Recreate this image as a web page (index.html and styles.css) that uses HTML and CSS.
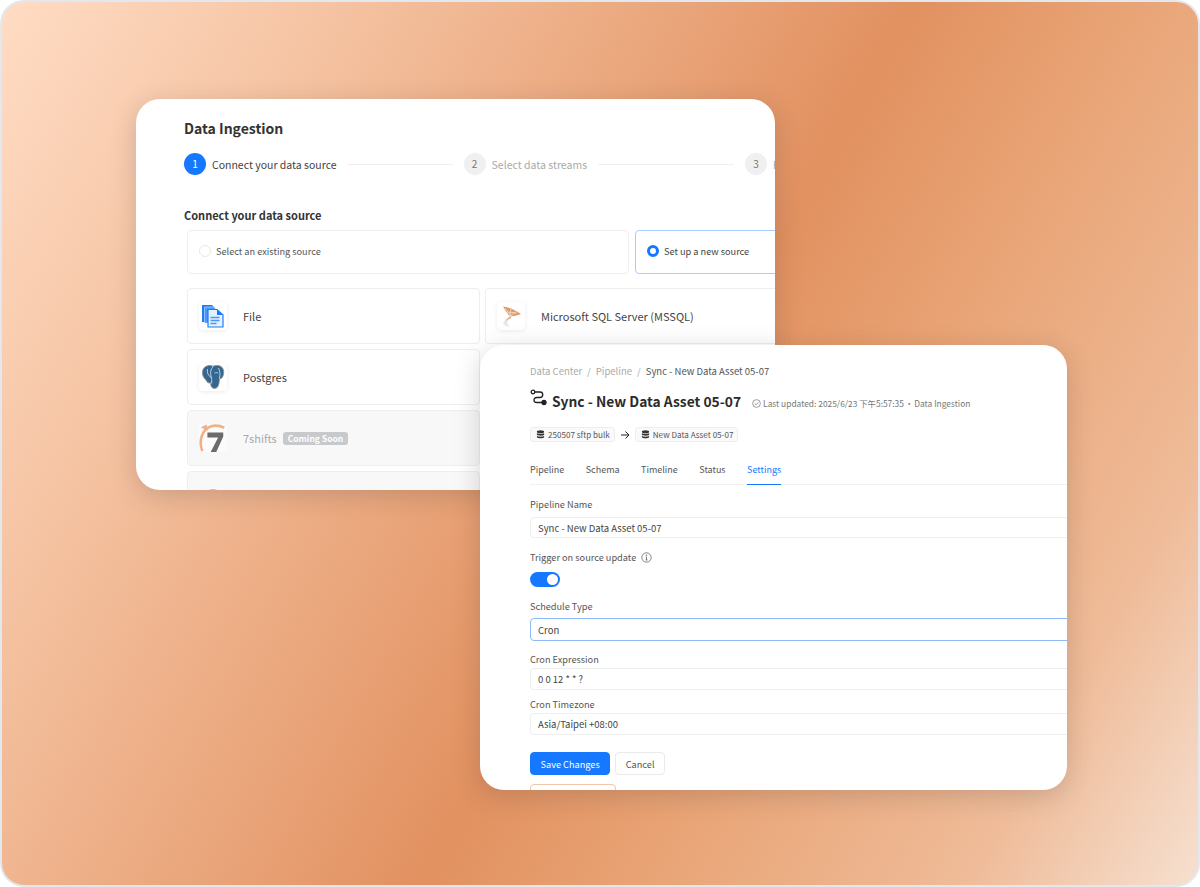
FILE: index.html
```html
<!DOCTYPE html>
<html lang="en">
<head>
  <meta charset="UTF-8" />
  <title>Data Ingestion</title>
  <link rel="stylesheet" href="styles.css">
</head>
<body>
  <div class="frame">

    <div class="window" id="ingestWindow">
      <h1 class="ingest-title">Data Ingestion</h1>

      <div class="stepper">
        <span class="step-num active">1</span>
        <span class="step-label active">Connect your data source</span>
        <span class="step-line first"></span>
        <span class="step-num">2</span>
        <span class="step-label">Select data streams</span>
        <span class="step-line second"></span>
        <span class="step-num">3</span>
        <span class="step-label">Review</span>
      </div>

      <h2 class="section-title">Connect your data source</h2>

      <div class="option-row">
        <div class="option wide"><span class="radio"></span>Select an existing source</div>
        <div class="option selected"><span class="radio on"></span>Set up a new source</div>
      </div>

      <div class="source-grid">
        <div class="source">
          <span class="source-icon">
            <svg width="24" height="24" viewBox="0 0 24 24">
              <path d="M1 1h10l2 2v15H1z" fill="#1c7cf5"/>
              <path d="M3.500 3h10l1 2v14h-11z" fill="#4a97fa" stroke="#cfe3ff" stroke-width=".6"/>
              <path d="M7 5.500h9l6 5.500v12H7z" fill="#e4efff" stroke="#1c7cf5" stroke-width="1.200"/>
              <path d="M16 5.500V11h6z" fill="#1c7cf5"/>
              <path d="M9.500 13.500h9M9.500 16.500h9M9.500 19.500h6" stroke="#4a97fa" stroke-width="1.300"/>
            </svg>
          </span>
          <span class="source-name">File</span>
        </div>
        <div class="source">
          <span class="source-icon">
            <svg width="26" height="26" viewBox="0 0 26 26">
              <path d="M7 2c2-.8 4-.6 6 .3 2-.9 4.500-1.100 7-.3 3.500 1.300 4.500 6 3 10-.8 2-2 3-3.500 2.500-.2 3-.5 6.500-2 8.500-1.500 1.800-4 1.800-5.500.5-1-1-1.300-3-1.300-5-1.300.8-2.700.5-3.700-.7C6 15.500 4.500 14.800 3.300 12.500 1.500 8.500 2.500 3.500 7 2z" fill="#336791" stroke="#8c8c8c" stroke-width=".9"/>
              <path d="M13 2.500c-2.500 3-3 6.500-1.800 10 .6 2 .7 4.500.5 7M18.500 4c1.500 3 2 7 .8 10.500M7.500 5c-.8 3 .5 6.500 3.500 8.500M14.500 9c1.500-.5 2.500-.5 3.500 0" fill="none" stroke="#dfe7ee" stroke-width=".8"/>
            </svg>
          </span>
          <span class="source-name">Postgres</span>
        </div>
        <div class="source disabled">
          <span class="source-icon faded">
            <svg width="30" height="32" viewBox="0 0 30 32">
              <path d="M3.500 30C-.5 19 3 7 13 3.500c4-1.200 9-1 14 1.500" fill="none" stroke="#eeb28b" stroke-width="2.800"/>
              <path d="M2 4.500l6.500-3 .5 7z" fill="#eeb28b"/>
              <path d="M9 10h17v4.500L18.500 31h-6l8-15.500H9z" fill="#6b6b6d"/>
            </svg>
          </span>
          <span class="source-name">7shifts</span>
          <span class="soon">Coming Soon</span>
        </div>
        <div class="source disabled">
          <span class="source-icon plain">
            <svg width="26" height="26" viewBox="0 0 26 26"><circle cx="13" cy="13" r="10" fill="#a9c9ec"/></svg>
          </span>
        </div>
      </div>

      <div class="source-grid side">
        <div class="source">
          <span class="source-icon">
            <svg width="24" height="24" viewBox="0 0 24 24">
              <path d="M10 13c-3 1.500-5.500 4-6 6.500 1 2 4 3.500 7 3-2.500-1.500-3-3.500-2-5.500 1-1.500 2.500-2.800 4-3.500z" fill="#e9e9e9"/>
              <path d="M4 2.500c5 .5 11 3 18 7.500-4 1.500-7.500 2-11 2.500C8 9 6 6 4 2.500z" fill="#dc9a68"/>
              <path d="M6 4l6 8M12 5l-1 7M17 7.500l-6 4.500M8 8l10 1" stroke="#f8e4d4" stroke-width=".7"/>
              <path d="M11 12.500c-2 1.500-3.500 2.500-4.500 4.500 2-1 4-2 6-3.500z" fill="#e8b088"/>
            </svg>
          </span>
          <span class="source-name">Microsoft SQL Server (MSSQL)</span>
        </div>
      </div>
    </div>

    <div class="window" id="pipelineWindow">
      <div class="crumbs">
        <span class="crumb">Data Center</span><span class="crumb-sep">/</span><span class="crumb">Pipeline</span><span class="crumb-sep">/</span><span class="crumb current">Sync - New Data Asset 05-07</span>
      </div>

      <div class="heading">
        <svg class="heading-icon" width="18" height="18" viewBox="0 0 18 18" fill="none" stroke="#222" stroke-width="1.300">
          <circle cx="3" cy="3" r="1.800"/>
          <path d="M5 3h5a2.500 2.500 0 0 1 0 5.500H6.500a2.500 2.500 0 0 0 0 5h6"/>
          <circle cx="14" cy="13.500" r="2" fill="#222"/>
        </svg>
        <h1 class="pipeline-title">Sync - New Data Asset 05-07</h1>
        <span class="meta">
          <svg width="9" height="9" viewBox="0 0 10 10" fill="none" stroke="#777" stroke-width=".8"><circle cx="5" cy="5" r="4.300"/><path d="M3 5l1.500 1.500L7 3.800"/></svg>
          Last updated: 2025/6/23 下午5:57:35<span class="dot">·</span>Data Ingestion
        </span>
      </div>

      <div class="flow">
        <span class="chip">
          <svg width="9" height="9" viewBox="0 0 10 10" fill="#333"><ellipse cx="5" cy="2" rx="4" ry="1.700"/><path d="M1 3.400c1 1.300 7 1.300 8 0v1.900c-1 1.300-7 1.300-8 0zM1 6.500c1 1.300 7 1.300 8 0v1.600c-1 1.600-7 1.600-8 0z"/></svg>
          250507 sftp bulk
        </span>
        <svg width="10" height="10" viewBox="0 0 10 10" fill="none" stroke="#222" stroke-width="1"><path d="M1 5h8M5.500 1.500L9 5 5.500 8.500"/></svg>
        <span class="chip">
          <svg width="9" height="9" viewBox="0 0 10 10" fill="#333"><ellipse cx="5" cy="2" rx="4" ry="1.700"/><path d="M1 3.400c1 1.300 7 1.300 8 0v1.900c-1 1.300-7 1.300-8 0zM1 6.500c1 1.300 7 1.300 8 0v1.600c-1 1.600-7 1.600-8 0z"/></svg>
          New Data Asset 05-07
        </span>
      </div>

      <div class="tabs">
        <span class="tab">Pipeline</span>
        <span class="tab">Schema</span>
        <span class="tab">Timeline</span>
        <span class="tab">Status</span>
        <span class="tab active">Settings</span>
      </div>

      <div class="field name-field">
        <label>Pipeline Name</label>
        <div class="input">Sync - New Data Asset 05-07</div>
      </div>

      <div class="trigger">
        <label>Trigger on source update
          <svg width="11" height="11" viewBox="0 0 11 11" fill="none" stroke="#666" stroke-width=".8"><circle cx="5.500" cy="5.500" r="4.700"/><path d="M5.500 5v3M4.500 8h2M4.800 4.800h.7"/><circle cx="5.500" cy="3.200" r=".4"/></svg>
        </label>
        <span class="toggle"><span class="knob"></span></span>
      </div>

      <div class="field type-field">
        <label>Schedule Type</label>
        <div class="input focus">Cron</div>
      </div>

      <div class="field expr-field">
        <label>Cron Expression</label>
        <div class="input">0 0 12 * * ?</div>
      </div>

      <div class="field zone-field">
        <label>Cron Timezone</label>
        <div class="input">Asia/Taipei +08:00</div>
      </div>

      <div class="actions">
        <button class="btn primary">Save Changes</button>
        <button class="btn">Cancel</button>
      </div>
      <div class="danger"></div>
    </div>

  </div>
</body>
</html>
```

FILE: styles.css
```css
html, body {
  margin: 0;
  background: #ffffff;
}
body {
  width: 1200px;
  height: 887px;
  overflow: hidden;
  font-family: "Noto Sans CJK TC", "Noto Sans", sans-serif;
  color: #333;
}
.frame {
  position: relative;
  box-sizing: border-box;
  width: 1200px;
  height: 887px;
  overflow: hidden;
  border: 2px solid #e3e8ee;
  border-radius: 24px;
  background: linear-gradient(119deg, #ffdcc4 0%, #f5c3a2 20%, #e29160 54%, #e9a577 68%, #efbb98 86%, #f6e0d0 100%);
}

.window {
  position: absolute;
  overflow: hidden;
  box-sizing: border-box;
  background: #fff;
  border-radius: 24px;
  box-shadow: 0 6px 26px rgba(70, 60, 60, 0.22);
}
#ingestWindow {
  left: 134px;
  top: 97px;
  width: 639px;
  height: 391px;
  padding: 19px 0 0 48px;
}
#pipelineWindow {
  left: 478px;
  top: 343px;
  width: 587px;
  height: 445px;
  padding: 19px 0 0 50px;
}

/* data ingestion window */
.ingest-title {
  margin: 0;
  font-size: 14px;
  line-height: 20px;
  font-weight: 700;
  color: #333;
}
.stepper {
  display: flex;
  align-items: center;
  margin-top: 15px;
  width: 640px;
  font-size: 10.500px;
}
.step-num {
  flex: none;
  width: 22px;
  height: 22px;
  line-height: 22px;
  border-radius: 50%;
  background: #f0f0f0;
  color: #777;
  text-align: center;
  font-size: 10px;
}
.step-num.active {
  background: #1677ff;
  color: #fff;
}
.step-label {
  flex: none;
  margin-left: 6px;
  color: #aaa;
}
.step-label.active {
  color: #444;
}
.step-line {
  flex: none;
  height: 1px;
  margin: 0 11px 0 11px;
  background: #efefef;
}
.step-line.first { width: 105px; }
.step-line.second { width: 136px; }

.section-title {
  margin: 31px 0 0;
  font-size: 11px;
  line-height: 18px;
  font-weight: 700;
  color: #333;
}
.option-row {
  display: flex;
  gap: 6px;
  width: 700px;
  margin: 6px 0 0 3px;
}
.option {
  box-sizing: border-box;
  flex: none;
  display: flex;
  align-items: center;
  gap: 5px;
  width: 200px;
  height: 44px;
  padding: 0 0 2px 11px;
  border: 1px solid #eeeeee;
  border-radius: 4px;
  font-size: 9.200px;
  color: #555;
}
.option.wide { width: 442px; }
.option.selected {
  border-color: #a9ccff;
  color: #444;
}
.radio {
  box-sizing: border-box;
  width: 12px;
  height: 12px;
  border: 1px solid #e6e6e6;
  border-radius: 50%;
}
.radio.on {
  border: 3.500px solid #1677ff;
}

.source-grid {
  display: flex;
  flex-direction: column;
  gap: 5px;
  width: 293px;
  margin: 14px 0 0 3px;
}
.source-grid.side {
  position: absolute;
  left: 349px;
  top: 189px;
  margin: 0;
  width: 340px;
}
.source {
  box-sizing: border-box;
  display: flex;
  align-items: center;
  height: 56px;
  padding-left: 11px;
  border: 1px solid #eeeeee;
  border-radius: 4px;
  font-size: 11px;
  color: #444;
}
.source.disabled {
  background: #f8f8f9;
  color: #aaa;
}
.source-icon {
  flex: none;
  display: flex;
  align-items: center;
  justify-content: center;
  width: 28px;
  height: 28px;
  border-radius: 4px;
  background: #fff;
  box-shadow: 0 1px 4px rgba(0, 0, 0, 0.08);
}
.source-icon.plain {
  background: none;
  box-shadow: none;
}
.source-icon.faded {
  box-shadow: none;
  background: #fbfbfb;
}
.source-name {
  margin-left: 16px;
}
.soon {
  margin-left: 6px;
  padding: 0 5px;
  height: 13px;
  line-height: 13px;
  border-radius: 3px;
  background: #c7c9cc;
  color: #fff;
  font-size: 8.500px;
  font-weight: 700;
}

/* pipeline window */
.crumbs {
  display: flex;
  height: 14px;
  line-height: 14px;
  font-size: 9.500px;
  color: #aaa;
}
.crumb-sep {
  margin: 0 5px;
}
.crumb.current {
  color: #555;
}
.heading {
  display: flex;
  align-items: center;
  height: 22px;
  margin-top: 12px;
}
.heading-icon {
  margin-top: -6px;
}
.pipeline-title {
  margin: 0 0 0 4px;
  font-size: 13.800px;
  line-height: 22px;
  font-weight: 700;
  color: #2b2b2b;
}
.meta {
  display: flex;
  align-items: center;
  gap: 1px;
  margin: 4px 0 0 11px;
  font-size: 8.400px;
  color: #777;
}
.meta svg {
  margin-right: 1px;
}
.dot {
  margin: 0;
}
.flow {
  display: flex;
  align-items: center;
  gap: 5px;
  margin-top: 15px;
}
.chip {
  display: flex;
  align-items: center;
  gap: 3px;
  box-sizing: border-box;
  height: 15px;
  padding: 0 4px 0 5px;
  border: 1px solid #eeeeee;
  border-radius: 3px;
  background: #fafafa;
  font-size: 8.100px;
  color: #555;
}
.tabs {
  display: flex;
  gap: 21.500px;
  width: 560px;
  margin-top: 20px;
  border-bottom: 1px solid #f0f0f0;
  font-size: 9px;
  color: #555;
}
.tab {
  padding-bottom: 7px;
  line-height: 15px;
  margin-bottom: -1px;
}
.tab.active {
  color: #1677ff;
  border-bottom: 1px solid #1677ff;
}

.field label, .trigger label {
  display: block;
  line-height: 14px;
  font-size: 9.200px;
  color: #555;
}
.trigger svg {
  vertical-align: -2px;
  margin-left: 3px;
}
.input {
  box-sizing: border-box;
  width: 600px;
  height: 22px;
  margin-top: 2px;
  padding-left: 7px;
  line-height: 21px;
  border: 1px solid #eeeeee;
  border-radius: 4px;
  font-size: 9.500px;
  color: #444;
}
.input.focus {
  height: 23px;
  margin-top: 5px;
  line-height: 22px;
  border-color: #8db9f8;
}
.name-field { margin-top: 12px; }
.name-field .input {
  height: 21px;
  margin-top: 6px;
  line-height: 20px;
}
.trigger { margin-top: 12px; }
.toggle {
  display: block;
  position: relative;
  width: 30px;
  height: 15px;
  margin-top: 8px;
  border-radius: 8px;
  background: #1677ff;
}
.knob {
  position: absolute;
  right: 2px;
  top: 2px;
  width: 11px;
  height: 11px;
  border-radius: 50%;
  background: #fff;
}
.type-field { margin-top: 12px; }
.expr-field { margin-top: 11px; }
.zone-field { margin-top: 7px; }
.actions {
  display: flex;
  gap: 5px;
  margin-top: 17px;
}
.btn {
  box-sizing: border-box;
  height: 23px;
  padding: 0 9.500px;
  border: 1px solid #eaeaea;
  border-radius: 4px;
  background: #fff;
  font-family: inherit;
  font-size: 9.200px;
  color: #555;
}
.btn.primary {
  border-color: #1677ff;
  background: #1677ff;
  color: #fff;
}
.danger {
  box-sizing: border-box;
  width: 86px;
  height: 20px;
  margin-top: 9px;
  border: 1px solid #f0c7ac;
  border-radius: 4px;
}
```
